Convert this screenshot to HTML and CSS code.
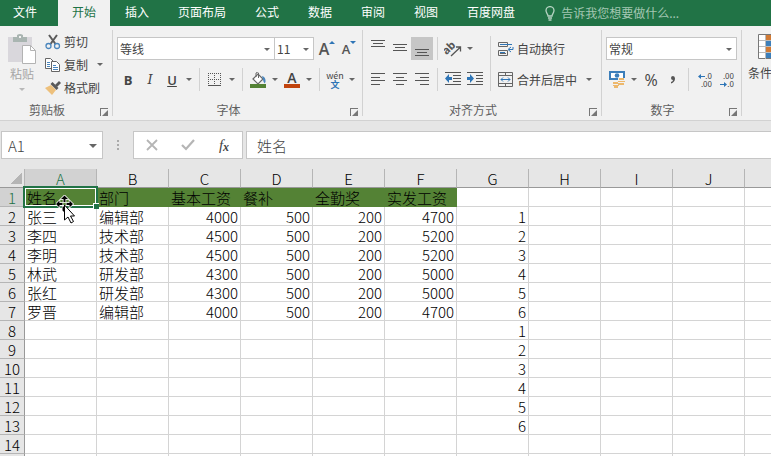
FILE: index.html
```html
<!DOCTYPE html>
<html lang="zh-CN">
<head>
    <meta charset="UTF-8">
    <meta name="viewport" content="width=device-width, initial-scale=1.0">
    <title>Excel</title>
    <link rel="stylesheet" href="styles.css">
</head>
<body>
    <nav class="tabs">
        <a class="tab file" href="#">文件</a>
        <a class="tab active" href="#">开始</a>
        <a class="tab" href="#">插入</a>
        <a class="tab" href="#">页面布局</a>
        <a class="tab" href="#">公式</a>
        <a class="tab" href="#">数据</a>
        <a class="tab" href="#">审阅</a>
        <a class="tab" href="#">视图</a>
        <a class="tab" href="#">百度网盘</a>
        <label class="tell-me">
            <svg width="10" height="15" viewBox="0 0 10 15" fill="none" stroke="#b7d4c3" stroke-width="1.3"><path d="M3 10C3 8 1 7 1 4.600a4 4 0 0 1 8 0C9 7 7 8 7 10zM3 12h4M3.500 14h3"/></svg>
            <input type="text" placeholder="告诉我您想要做什么...">
        </label>
    </nav>

    <div class="ribbon">
        <section class="group clipboard">
            <div class="group-body">
                <button class="big-btn disabled">
                    <svg width="28" height="31" viewBox="0 0 28 31"><path d="M0 3h24v25H0z" fill="#d9d7dc"/><path d="M5 3h4V1q3-2 6 0v2h4v5H5z" fill="#a9b5b1"/><path d="M11 2h2v2h-2z" fill="#f1f1f1"/><path d="M14.500 11.500h8l5 5v13h-13z" fill="#fff" stroke="#b3b3b3"/><path d="M22.500 11.500v5h5" fill="none" stroke="#b3b3b3"/></svg>
                    <span>粘贴</span>
                    <i class="caret"></i>
                </button>
                <div class="stack">
                    <button class="text-btn">
                        <svg width="16" height="16" viewBox="0 0 16 16" fill="none"><path d="M4 1l6.500 9M12 1L5.500 10" stroke="#5a5a5a" stroke-width="2"/><circle cx="3.500" cy="12" r="2.500" stroke="#4a86bd" stroke-width="1.300"/><circle cx="12" cy="12" r="2.500" stroke="#4a86bd" stroke-width="1.300"/></svg>
                        剪切
                    </button>
                    <button class="text-btn">
                        <svg width="16" height="16" viewBox="0 0 16 16" fill="#fff" stroke="#666"><path d="M.5 1.500h5l3 3v7h-8z"/><path d="M6.500 4.500h5l3 3v7h-8z"/><path d="M2 5.500h3M2 7.500h3M2 9.500h3M8 8.500h3M8 10.500h5M8 12.500h5" stroke="#4a86bd"/></svg>
                        复制
                        <i class="caret"></i>
                    </button>
                    <button class="text-btn">
                        <svg width="16" height="16" viewBox="0 0 16 16"><path d="M0 8l6-3 5 5-4 5z" fill="#edc07c"/><path d="M5.500 4l2-2 6 6-2 2z" fill="#595959"/><path d="M10 5l4-4 2 2-4 4z" fill="#595959"/></svg>
                        格式刷
                    </button>
                </div>
            </div>
            <div class="group-label">剪贴板<button class="launcher" aria-label="剪贴板设置"></button></div>
        </section>

        <section class="group font">
            <div class="group-body rows">
                <div class="row">
                    <span class="select font-name"><select aria-label="字体"><option>等线</option></select></span>
                    <span class="select font-size"><select aria-label="字号"><option>11</option></select></span>
                    <button class="btn grow-font" aria-label="增大字号"><b>A</b><svg width="6" height="3" viewBox="0 0 6 3"><path d="M0 3l3-3 3 3z" fill="#2e75b6"/></svg></button>
                    <button class="btn shrink-font" aria-label="减小字号"><b>A</b><svg width="6" height="3" viewBox="0 0 6 3"><path d="M0 0h6L3 3z" fill="#2e75b6"/></svg></button>
                </div>
                <div class="row">
                    <button class="btn letter bold">B</button>
                    <button class="btn letter italic">I</button>
                    <button class="btn letter underline">U</button>
                    <button class="drop" aria-label="下划线选项"><i class="caret"></i></button>
                    <i class="sep"></i>
                    <button class="btn" aria-label="边框"><svg width="14" height="14" viewBox="0 0 14 14" stroke="#555" stroke-dasharray="1 1"><path d="M0 .5h13M0 6.500h13M.5 0v12M6.500 0v12M12.500 0v12"/><path d="M0 12.500h13" stroke-dasharray="none"/></svg></button>
                    <button class="drop" aria-label="边框选项"><i class="caret"></i></button>
                    <i class="sep"></i>
                    <button class="btn" aria-label="填充颜色"><svg width="16" height="16" viewBox="0 0 16 16"><path d="M3 7l5-5 5 5-5 5z" fill="#fff" stroke="#666" stroke-width="1.200"/><path d="M6 5V1q1.500-1.500 2.500 0v5" fill="none" stroke="#666"/><path d="M12 4q4 1 3.500 6l-1 1.500-1-2z" fill="#4a86bd"/><path d="M0 12h16v4H0z" fill="#548235"/></svg></button>
                    <button class="drop" aria-label="填充选项"><i class="caret"></i></button>
                    <button class="btn font-color" aria-label="字体颜色"><b>A</b></button>
                    <button class="drop" aria-label="字体颜色选项"><i class="caret"></i></button>
                    <i class="sep"></i>
                    <button class="btn phonetic"><span>wén</span><span>文</span></button>
                    <button class="drop" aria-label="拼音选项"><i class="caret"></i></button>
                </div>
            </div>
            <div class="group-label">字体<button class="launcher" aria-label="字体设置"></button></div>
        </section>

        <section class="group align">
            <div class="group-body">
                <div class="rows">
                    <div class="row">
                        <button class="btn" aria-label="顶端对齐"><svg class="lines" width="14" height="17" viewBox="0 0 14 17"><path d="M0 .5h14M2 3.500h10M0 6.500h14"/></svg></button>
                        <button class="btn" aria-label="垂直居中"><svg class="lines" width="14" height="17" viewBox="0 0 14 17"><path d="M0 4.500h14M2 7.500h10M0 10.500h14"/></svg></button>
                        <button class="btn pressed" aria-label="底端对齐"><svg class="lines" width="14" height="17" viewBox="0 0 14 17"><path d="M0 9.500h14M2 12.500h10M0 15.500h14"/></svg></button>
                        <i class="sep"></i>
                        <button class="btn" aria-label="方向"><svg width="18" height="18" viewBox="0 0 18 18"><text x="-1" y="11" transform="rotate(-45 6 9)" class="ab">ab</text><path d="M7 16l9-8.500M12 7h4.500v4.500" fill="none" stroke="#555" stroke-width="1.300"/></svg></button>
                        <button class="drop" aria-label="方向选项"><i class="caret"></i></button>
                    </div>
                    <div class="row">
                        <button class="btn" aria-label="左对齐"><svg class="lines" width="14" height="13" viewBox="0 0 14 13"><path d="M0 .5h14M0 4.500h9M0 7.500h14M0 11.500h9"/></svg></button>
                        <button class="btn" aria-label="居中"><svg class="lines" width="14" height="13" viewBox="0 0 14 13"><path d="M0 .5h14M3 4.500h8M0 7.500h14M3 11.500h8"/></svg></button>
                        <button class="btn" aria-label="右对齐"><svg class="lines" width="14" height="13" viewBox="0 0 14 13"><path d="M0 .5h14M5 4.500h9M0 7.500h14M5 11.500h9"/></svg></button>
                        <i class="sep"></i>
                        <button class="btn" aria-label="减少缩进"><svg class="lines" width="16" height="15" viewBox="0 0 16 15"><path d="M0 .5h16M8 3.500h8M8 6.500h8M8 9.500h8M0 12.500h16"/><path class="arrow" d="M7 5H4V2L0 6.500 4 11V8h3z"/></svg></button>
                        <button class="btn" aria-label="增加缩进"><svg class="lines" width="16" height="15" viewBox="0 0 16 15"><path d="M0 .5h16M9 3.500h7M9 6.500h7M9 9.500h7M0 12.500h16"/><path class="arrow" d="M0 5h3V2l4 4.500L3 11V8H0z"/></svg></button>
                    </div>
                </div>
                <i class="sep tall"></i>
                <div class="rows wide">
                    <button class="text-btn">
                        <svg width="16" height="16" viewBox="0 0 16 16" fill="none" stroke="#666"><path d="M.5 1.500h9v4h-9zM.5 9.500h9v5h-9zM2 12.500h6"/><path d="M2 3.500h12M2 11.500h5M15 6v2.500h-4M13 6l-3 2.500 3 2.500" stroke="#2e75b6"/></svg>
                        自动换行
                    </button>
                    <button class="text-btn">
                        <svg width="16" height="16" viewBox="0 0 16 16" fill="none" stroke="#666"><path d="M.5.500h14v14H.5zM.5 3.500h14M.5 11.500h14M7.500 0v4M7.500 12v3"/><path d="M3 7.500h9M5 5.500l-2 2 2 2M10 5.500l2 2-2 2" stroke="#2e75b6"/></svg>
                        合并后居中
                        <i class="caret"></i>
                    </button>
                </div>
            </div>
            <div class="group-label">对齐方式<button class="launcher" aria-label="对齐设置"></button></div>
        </section>

        <section class="group number">
            <div class="group-body rows">
                <div class="row">
                    <span class="select number-format"><select aria-label="数字格式"><option>常规</option></select></span>
                </div>
                <div class="row">
                    <button class="btn" aria-label="会计数字格式"><svg width="17" height="17" viewBox="0 0 17 17"><path d="M0 0h16v9H0z" fill="#3d7fba"/><path d="M2 2h12v5H2z" fill="#fff"/><circle cx="8" cy="4.500" r="2.300" fill="#3d7fba"/><path d="M9 7h7v7H9zM4 11h6v5H4z" fill="#f1f1f1"/><path d="M10 7h5v2h-5zM9 10h7v1H9zM9 12h6v2H9zM4 11h5v2H4zM4 14h6v1H4zM5 15h4v2H5z" fill="#edb86c"/></svg></button>
                    <button class="drop" aria-label="货币选项"><i class="caret"></i></button>
                    <button class="btn percent">%</button>
                    <button class="btn" aria-label="千位分隔样式"><svg width="6" height="8" viewBox="0 0 6 8"><path d="M1 2q0-2 2-2t2 2.500Q5 6 1 7.500V6q2-.5 2-2-2 0-2-2z" fill="#555"/></svg></button>
                    <i class="sep"></i>
                    <button class="btn decimals"><span><svg width="7" height="5" viewBox="0 0 7 5"><path d="M3 0L0 2.500 3 5V3h4V2H3z" fill="#2e75b6"/></svg>.0</span><span>.00</span></button>
                    <button class="btn decimals"><span>.00</span><span><svg width="7" height="5" viewBox="0 0 7 5"><path d="M4 0l3 2.500L4 5V3H0V2h4z" fill="#2e75b6"/></svg>.0</span></button>
                </div>
            </div>
            <div class="group-label">数字<button class="launcher" aria-label="数字设置"></button></div>
        </section>

        <section class="group styles">
            <div class="group-body">
                <button class="big-btn">
                    <svg width="28" height="26" viewBox="0 0 28 26"><path d="M.5.500h27v24H.5z" fill="#fff" stroke="#777"/><path d="M8 1h19v5H8zM8 13h12v5H8z" fill="#d07a35"/><path d="M8 7h12v5H8zM8 19h6v5H8z" fill="#3d7fba"/><path d="M1 6.500h26M1 12.500h26M1 18.500h26M7.500 1v24" stroke="#bbb"/></svg>
                    <span>条件格式</span>
                </button>
            </div>
        </section>
    </div>

    <div class="formula-bar">
        <span class="select name-box"><input type="text" value="A1" aria-label="名称框"></span>
        <i class="dots"></i>
        <div class="fx-buttons">
            <button aria-label="取消"><svg width="12" height="12" viewBox="0 0 12 12"><path d="M1 1l10 10M11 1L1 11" stroke="#b5b5b5" stroke-width="1.800"/></svg></button>
            <button aria-label="输入"><svg width="14" height="12" viewBox="0 0 14 12"><path d="M1 6l4 4 8-9" fill="none" stroke="#b5b5b5" stroke-width="2.200"/></svg></button>
            <button class="fx"><b>f</b><small>x</small></button>
        </div>
        <input class="formula" type="text" value="姓名" aria-label="编辑栏">
    </div>

    <div class="sheet">
        <table id="grid"></table>
    </div>

    <script>
        const columns = ['A', 'B', 'C', 'D', 'E', 'F', 'G', 'H', 'I', 'J', 'K'];
        const data = [
            ['姓名', '部门', '基本工资', '餐补', '全勤奖', '实发工资'],
            ['张三', '编辑部', 4000, 500, 200, 4700, 1],
            ['李四', '技术部', 4500, 500, 200, 5200, 2],
            ['李明', '技术部', 4500, 500, 200, 5200, 3],
            ['林武', '研发部', 4300, 500, 200, 5000, 4],
            ['张红', '研发部', 4300, 500, 200, 5000, 5],
            ['罗晋', '编辑部', 4000, 500, 200, 4700, 6]
        ];
        // G8:G13 repeats the helper numbers
        for (let i = 1; i <= 6; i++) {
            data.push(['', '', '', '', '', '', i]);
        }
        data.push([], []);

        const grid = document.getElementById('grid');
        const head = grid.createTHead().insertRow();
        ['', ...columns].forEach((name, i) => {
            const th = document.createElement('th');
            th.textContent = name;
            if (i === 0) th.className = 'corner';
            if (i === 1) th.className = 'current';
            head.appendChild(th);
        });

        const body = grid.createTBody();
        data.forEach((values, r) => {
            const row = body.insertRow();
            const th = document.createElement('th');
            th.textContent = r + 1;
            if (r === 0) th.className = 'current';
            row.appendChild(th);
            columns.forEach((name, c) => {
                const cell = row.insertCell();
                const value = values[c] ?? '';
                cell.textContent = value;
                if (typeof value === 'number') cell.classList.add('num');
                if (r === 0 && c < 6) cell.classList.add('title');
            });
        });

        // Selection frame and mouse pointer sit on A1
        const first = body.rows[0].cells[1];
        first.classList.add('selected');
        first.insertAdjacentHTML('beforeend', `
            <i class="handle"></i>
            <svg class="pointer" width="20" height="29" viewBox="0 0 20 29">
                <path d="M8.500 .5l3.500 3.500h-2.500v3h-2V4H5zM8.500 17.500l-2-2v-4h2zM0 9l3.500-3.500V8h3v2h-3v2.500zM17 9l-3.500-3.500V8h-3v2h3v2.500z" fill="#000" stroke="#fff" stroke-width="1.500" paint-order="stroke"/>
                <path d="M8.500 10v15l3.500-3 3 6 2.500-1.500-3-5.500h4z" fill="#fff" stroke="#000"/>
            </svg>`);
    </script>
</body>
</html>
```

FILE: styles.css
```css
* {
    box-sizing: border-box;
}
body {
    margin: 0;
    height: 100vh;
    display: flex;
    flex-direction: column;
    overflow: hidden;
    background: #e6e6e6;
    color: #444;
    font-family: "Noto Sans CJK SC", sans-serif;
    font-size: 12px;
    line-height: 14px;
}
button, input, select {
    font: inherit;
    color: inherit;
    background: none;
    border: 0;
    border-radius: 0;
    padding: 0;
    margin: 0;
    outline: none;
}
svg {
    flex: none;
}

/* tabs */
.tabs {
    display: flex;
    gap: 1px;
    height: 26px;
    flex: none;
    background: #217346;
}
.tab {
    padding: 5px 14px 0;
    color: #fff;
    text-decoration: none;
    white-space: nowrap;
}
.tab.file {
    width: 57px;
    padding-left: 13px;
}
.tab.active {
    background: #f1f1f1;
    color: #217346;
}
.tell-me {
    display: flex;
    align-items: center;
    gap: 6px;
    flex: 1;
    padding-left: 15px;
}
.tell-me input {
    flex: 1;
    min-width: 0;
}
.tell-me input::placeholder {
    color: #a3c7b2;
    opacity: 1;
}

/* ribbon */
.ribbon {
    display: flex;
    flex: none;
    height: 95px;
    padding: 4px 0;
    background: #f1f1f1;
    border-bottom: 1px solid #d2d2d2;
}
.group {
    display: flex;
    flex-direction: column;
    flex: none;
    padding-left: 4px;
    border-right: 1px solid #d2d2d2;
}
.group-body {
    display: flex;
    flex: 1;
}
.group-label {
    position: relative;
    height: 14px;
    line-height: 16px;
    text-align: center;
    color: #5f5f5f;
}
.clipboard { width: 113px; }
.font { width: 250px; }
.align { width: 239px; }
.number { width: 140px; }
.styles {
    flex: 1;
    min-width: 0;
    padding-left: 6px;
    overflow: hidden;
    border: 0;
}
.group-label {
    padding-right: 22px;
}
.launcher {
    position: absolute;
    right: 4px;
    bottom: 0;
    width: 8px;
    height: 8px;
    border: 1px solid #777;
    border-width: 1px 0 0 1px;
}
.launcher::after {
    content: "";
    position: absolute;
    right: 0;
    bottom: 0;
    border: 3px solid #777;
    border-top-color: transparent;
    border-left-color: transparent;
}
.rows {
    display: flex;
    flex-direction: column;
    gap: 8px;
}
.group-body.rows, .group-body > .rows {
    padding-top: 7px;
}
.row {
    display: flex;
    height: 23px;
}
.btn {
    display: flex;
    align-items: center;
    justify-content: center;
    width: 22px;
    height: 23px;
}
.btn.pressed {
    background: #c6c6c6;
}
.drop {
    display: flex;
    align-items: center;
    justify-content: center;
    width: 12px;
}
.caret, .select::after {
    border: 3px solid transparent;
    border-top-color: #666;
    border-bottom: 0;
}
.sep {
    width: 1px;
    margin: 0 4px;
    background: #d2d2d2;
}
.sep.tall {
    margin: 6px 4px 0;
    height: 55px;
}
.big-btn {
    display: flex;
    flex-direction: column;
    align-items: center;
    gap: 2px;
    padding-top: 4px;
    color: #444;
    white-space: nowrap;
}
.clipboard .big-btn {
    width: 36px;
}
.big-btn .caret {
    margin-top: 5px;
}
.big-btn.disabled {
    color: #a6a6a6;
}
.big-btn.disabled .caret {
    border-top-color: #b8b8b8;
}
.styles .big-btn {
    gap: 6px;
}
.stack {
    flex: 1;
    padding-left: 5px;
}
.text-btn {
    display: flex;
    align-items: center;
    gap: 3px;
    width: 100%;
    height: 23px;
    white-space: nowrap;
}
.text-btn .caret {
    margin-left: auto;
    margin-right: 9px;
}
.wide {
    flex: 1;
    padding-left: 3px;
}

/* drop-down boxes */
.select {
    position: relative;
    display: flex;
    background: #fff;
    border: 1px solid #c6c6c6;
}
.select::after {
    content: "";
    position: absolute;
    right: 4px;
    top: 50%;
    margin-top: -1px;
    pointer-events: none;
}
.select select {
    appearance: none;
    width: 100%;
    padding-left: 2px;
}
.font-name { width: 158px; }
.font-size {
    width: 40px;
    margin: 0 2px 0 -1px;
}
.number-format { width: 131px; }

/* font buttons */
.grow-font, .shrink-font {
    align-items: flex-start;
    padding-top: 4px;
    font-size: 16px;
    line-height: 16px;
}
.shrink-font {
    font-size: 13px;
}
.grow-font b, .shrink-font b {
    font-family: "Open Sans", sans-serif;
    font-weight: 600;
    color: #555;
}
.letter {
    font-family: "Open Sans", sans-serif;
    font-size: 13px;
}
.bold { font-weight: bold; }
.italic {
    font-family: "DejaVu Serif", serif;
    font-style: italic;
}
.underline {
    font-weight: 600;
    text-decoration: underline;
}
.font-color b {
    width: 16px;
    height: 16px;
    border-bottom: 4px solid #c1440e;
    font-family: "Open Sans", sans-serif;
    font-size: 14px;
    font-weight: 600;
    line-height: 12px;
}
.phonetic {
    flex-direction: column;
    font-size: 9px;
    line-height: 9px;
}
.phonetic span:last-child {
    color: #2e75b6;
    font-weight: bold;
}
.lines path {
    stroke: #555;
}
.lines .arrow {
    fill: #2e75b6;
    stroke: none;
}
.ab {
    font: bold 11px "Open Sans", sans-serif;
    fill: #555;
}
.percent {
    font-family: "Open Sans", sans-serif;
    font-size: 16px;
}
.decimals {
    flex-direction: column;
    align-items: flex-end;
    padding-right: 3px;
    font-size: 8px;
    line-height: 8px;
}

/* formula bar */
.formula-bar {
    display: flex;
    flex: none;
    height: 48px;
    padding: 10px 0 10px 1px;
    font-size: 15px;
    font-weight: 300;
}
.name-box {
    width: 102px;
}
.name-box::after {
    right: 5px;
    border-width: 4px 4px 0;
}
.name-box input {
    width: 100%;
    padding-left: 6px;
}
.dots {
    width: 2px;
    margin: 9px 14px;
    border-left: 2px dotted #aaa;
}
.fx-buttons {
    display: flex;
    width: 110px;
    background: #fff;
    border: 1px solid #c6c6c6;
}
.fx-buttons button {
    display: flex;
    flex: 1;
    align-items: center;
    justify-content: center;
}
.fx {
    font-family: "Liberation Serif", serif;
    font-style: italic;
}
.fx small {
    font-size: 12px;
    font-weight: bold;
    padding-top: 3px;
}
.formula {
    flex: 1;
    min-width: 0;
    margin-left: 3px;
    padding-left: 10px;
    background: #fff;
    border: 1px solid #c6c6c6;
    border-right: 0;
}

/* sheet */
.sheet {
    flex: 1;
    overflow: hidden;
    background: #fff;
}
#grid {
    width: 817px;
    table-layout: fixed;
    border-collapse: separate;
    border-spacing: 0;
    color: #000;
    font-size: 15px;
    font-weight: 300;
    line-height: 16px;
}
#grid th, #grid td {
    height: 19px;
    padding: 2px 2px 0;
    border: solid #d4d4d4;
    border-width: 0 1px 1px 0;
    white-space: nowrap;
}
#grid th {
    padding: 2px 0 0;
    background: #e6e6e6;
    border-color: #b5b5b5;
    font-weight: 300;
}
#grid thead th {
    border-bottom-color: #999;
}
#grid tbody th {
    border-right-color: #999;
}
#grid th.current {
    background: #d2d2d2;
    color: #217346;
}
#grid .corner {
    width: 25px;
    background: linear-gradient(135deg, transparent 50%, #b5b5b5 50%) 11px 4px / 11px 11px no-repeat #e6e6e6;
}
#grid .num {
    text-align: right;
}
#grid .title {
    background: #548235;
    border-color: #548235;
}
#grid .selected {
    position: relative;
}
.selected::before {
    content: "";
    position: absolute;
    inset: -2px;
    border: 2px solid #217346;
    box-shadow: inset 0 0 0 1px #fff;
}
.handle {
    position: absolute;
    right: -3px;
    bottom: -3px;
    width: 6px;
    height: 6px;
    background: #217346;
    border: solid #fff;
    border-width: 1px 0 0 1px;
}
.pointer {
    position: absolute;
    left: 31px;
    top: 7px;
    z-index: 1;
}
```
